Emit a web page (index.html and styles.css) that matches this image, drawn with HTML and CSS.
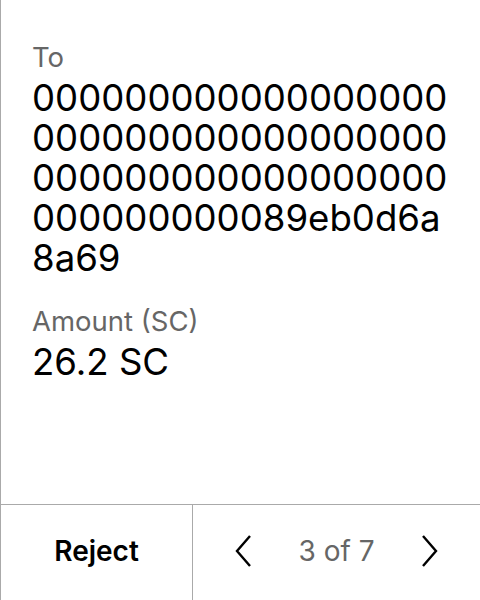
FILE: index.html
```html
<!DOCTYPE html>
<html>
<head>
<meta charset="utf-8">
<link rel="stylesheet" href="styles.css">
</head>
<body>
<div class="screen">
  <main class="content">
    <div class="field">
      <div class="label">To</div>
      <div class="value address"><span>00000</span><span>00000</span><span>00000</span><span>00000</span><span>00000</span><span>00000</span><span>00000</span><span>00000</span><span>00000</span><span>00000</span><span>00000</span><span>00000</span><span>0000</span><span>89eb0d6a8a69</span></div>
    </div>
    <div class="field">
      <div class="label">Amount (SC)</div>
      <div class="value">26.2 SC</div>
    </div>
  </main>
  <footer class="footer">
    <div class="reject">Reject</div>
    <div class="pager">
      <svg class="chev" width="16" height="32" viewBox="0 0 16 32"><path d="M15 1 L2 16 L15 31" fill="none" stroke="#000" stroke-width="2.4"/></svg>
      <span class="count">3 of 7</span>
      <svg class="chev" width="16" height="32" viewBox="0 0 16 32"><path d="M1 1 L14 16 L1 31" fill="none" stroke="#000" stroke-width="2.4"/></svg>
    </div>
  </footer>
</div>
</body>
</html>
```
FILE: styles.css
```css
html, body {
  margin: 0;
  padding: 0;
  background: #fff;
}
.screen {
  width: 480px;
  height: 600px;
  box-sizing: border-box;
  border-left: 1px solid #aaa;
  display: flex;
  flex-direction: column;
  font-family: Inter, "Noto Sans", sans-serif;
  color: #000;
}
.content {
  flex: 1;
  padding: 40px 28px 0 31px;
  display: flex;
  flex-direction: column;
  gap: 26px;
}
.label {
  font-size: 27.5px;
  line-height: 34px;
  color: #666;
}
.value {
  font-size: 36.6px;
  line-height: 40px;
  margin-top: 4px;
}
.address {
  word-break: break-all;
}
.footer {
  height: 96px;
  border-top: 1px solid #aaa;
  box-sizing: border-box;
  display: flex;
  padding-bottom: 3px;
}
.reject {
  width: 191px;
  border-right: 1px solid #aaa;
  display: flex;
  align-items: center;
  justify-content: center;
  font-size: 28px;
  font-weight: 600;
  margin-bottom: -3px;
  padding-bottom: 3px;
}
.pager {
  flex: 1;
  display: flex;
  align-items: center;
  justify-content: space-between;
  padding: 0 42px 0 42px;
}
.count {
  font-size: 28px;
  color: #666;
}
.chev {
  display: block;
}
```
